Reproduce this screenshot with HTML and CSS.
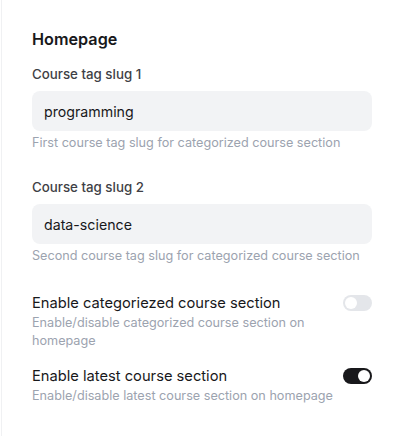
FILE: index.html
```html
<!DOCTYPE html>
<html>
<head>
<meta charset="utf-8">
<link rel="stylesheet" href="styles.css">
</head>
<body>
<div class="panel">
  <h2 class="title">Homepage</h2>
  <div class="field">
    <label class="label">Course tag slug 1</label>
    <div class="input">programming</div>
    <p class="help">First course tag slug for categorized course section</p>
  </div>
  <div class="field field-2">
    <label class="label">Course tag slug 2</label>
    <div class="input">data-science</div>
    <p class="help">Second course tag slug for categorized course section</p>
  </div>
  <div class="toggle-row row-1">
    <div class="toggle-text">
      <div class="toggle-label">Enable categoriezed course section</div>
      <p class="help">Enable/disable categorized course section on homepage</p>
    </div>
    <span class="switch"><span class="knob"></span></span>
  </div>
  <div class="toggle-row row-2">
    <div class="toggle-text">
      <div class="toggle-label">Enable latest course section</div>
      <p class="help">Enable/disable latest course section on homepage</p>
    </div>
    <span class="switch on"><span class="knob"></span></span>
  </div>
</div>
</body>
</html>
```
FILE: styles.css
```css
html, body {
  margin: 0;
  padding: 0;
  background: #ffffff;
  height: 100%;
}
body {
  font-family: Inter, "Liberation Sans", sans-serif;
  padding-left: 1px;
  box-sizing: border-box;
}
.panel {
  border-left: 1px solid #f0f1f3;
  min-height: 100%;
  box-sizing: border-box;
  padding: 27px 28px 0 30px;
  display: flex;
  flex-direction: column;
}
.title {
  margin: 0;
  font-size: 16.2px;
  line-height: 24px;
  font-weight: 600;
  color: #18181b;
}
.field {
  display: flex;
  flex-direction: column;
  margin-top: 13px;
}
.field-2 {
  margin-top: 26px;
}
.label {
  font-size: 13.3px;
  line-height: 20px;
  color: #3f3f46;
  font-weight: 500;
}
.input {
  margin-top: 7px;
  height: 40px;
  box-sizing: border-box;
  background: #f2f3f5;
  border-radius: 8px;
  padding: 0 12px;
  display: flex;
  align-items: center;
  font-size: 14.2px;
  color: #18181b;
}
.help {
  margin: 4px 0 0;
  font-size: 12.65px;
  line-height: 16px;
  color: #9ca3af;
}
.toggle-row {
  display: flex;
  justify-content: space-between;
  align-items: flex-start;
  gap: 6px;
}
.row-1 {
  margin-top: 29px;
}
.row-2 {
  margin-top: 16px;
}
.toggle-text {
  flex: 1;
  max-width: 305px;
}
.toggle-label {
  font-size: 14.7px;
  line-height: 20px;
  color: #18181b;
}
.toggle-text .help {
  margin-top: 1px;
  line-height: 18px;
}
.switch {
  flex: none;
  width: 29px;
  height: 16px;
  border-radius: 8px;
  background: #e4e6ea;
  margin-top: 2px;
  display: flex;
  align-items: center;
  padding: 0 2px;
  box-sizing: border-box;
}
.switch.on {
  background: #18181b;
  justify-content: flex-end;
}
.knob {
  width: 12px;
  height: 12px;
  border-radius: 50%;
  background: #ffffff;
}
```
